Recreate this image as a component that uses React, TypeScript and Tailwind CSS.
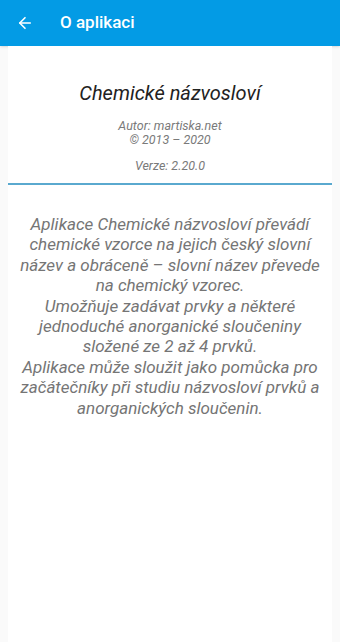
import { ArrowLeft } from 'lucide-react';

export default function App() {
  return (
    <div className="min-h-[642px] bg-[#fafafa] flex flex-col font-['Roboto',sans-serif]">
      <header className="h-[46px] bg-[#039be5] flex items-center px-4 shadow-sm">
        <ArrowLeft className="w-[18px] h-[18px] text-white" strokeWidth={2.2} />
        <h1 className="ml-[26px] text-white text-[17px] font-medium">O aplikaci</h1>
      </header>
      <main className="flex-1 mx-2 bg-white flex flex-col items-center">
        <h2 className="mt-[32px] text-[20px] leading-[30px] italic text-[#222222]">Chemické názvosloví</h2>
        <div className="mt-[11px] text-[12.5px] italic text-[#7a7a7a] text-center leading-[14px]">
          <p>Autor: martiska.net</p>
          <p>© 2013 – 2020</p>
        </div>
        <p className="mt-[12px] text-[12.5px] leading-[14px] italic text-[#7a7a7a]">Verze: 2.20.0</p>
        <div className="mt-[10px] w-full h-[2px] bg-[#5aa9cf]" />
        <div className="mt-[29px] px-3 text-[17px] italic text-[#757575] text-center leading-[20.4px]">
          <p>Aplikace Chemické názvosloví převádí chemické vzorce na jejich český slovní název a obráceně – slovní název převede na chemický vzorec.</p>
          <p>Umožňuje zadávat prvky a některé jednoduché anorganické sloučeniny složené ze 2 až 4 prvků.</p>
          <p>Aplikace může sloužit jako pomůcka pro začátečníky při studiu názvosloví prvků a anorganických sloučenin.</p>
        </div>
      </main>
    </div>
  );
}
